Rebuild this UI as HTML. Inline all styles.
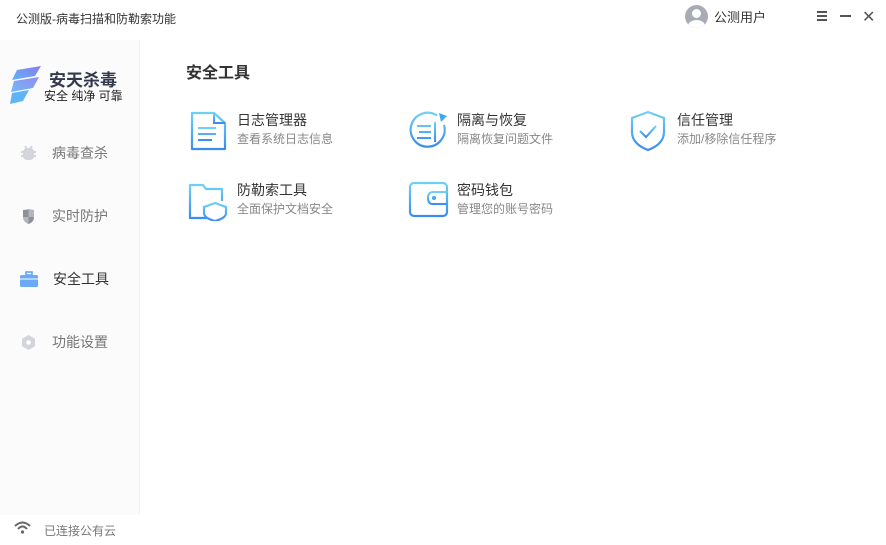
<!DOCTYPE html>
<html><head><meta charset="utf-8"><style>
*{margin:0;padding:0;box-sizing:border-box}
body{width:886px;height:545px;background:#fff;font-family:"Liberation Sans","Noto Sans CJK SC",sans-serif;position:relative;overflow:hidden;color:#333}
.abs{position:absolute}
.side{left:0;top:40px;width:140px;height:475px;background:#fbfbfc;border-right:1px solid #f1f1f3}
.nav{left:20px;font-size:14px;color:#777;display:flex;align-items:center}
.nav span{margin-left:15px}
.tool{display:flex}
.tool .t{font-size:14px;color:#333;line-height:18px}
.tool .s{font-size:12px;color:#888;margin-top:2px;line-height:16px}
svg{display:block}
</style></head><body>
<div class="abs" style="left:16px;top:10px;font-size:12px;color:#333">公测版-病毒扫描和防勒索功能</div>
<div class="abs" style="left:685px;top:5px;width:23px;height:23px;border-radius:50%;background:#a9acb5;overflow:hidden">
<div style="position:absolute;left:7px;top:4px;width:9px;height:9px;border-radius:50%;background:#fff"></div>
<div style="position:absolute;left:3px;top:15px;width:17px;height:12px;border-radius:50%;background:#fff"></div></div>
<div class="abs" style="left:714px;top:9px;font-size:13px;color:#333;line-height:18px">公测用户</div>
<div class="abs" style="left:817px;top:11px;width:10px"><div style="height:1.5px;background:#555;margin-bottom:2.5px"></div><div style="height:1.5px;background:#555;margin-bottom:2.5px"></div><div style="height:1.5px;background:#555"></div></div>
<div class="abs" style="left:840px;top:15px;width:11px;height:2px;background:#555"></div>
<div class="abs" style="left:862px;top:7px;font-size:16px;color:#555">✕</div>

<div class="abs side"></div>
<svg class="abs" style="left:9px;top:66px" width="36" height="38" viewBox="0 0 36 38"><defs><linearGradient id="g" x1="0" y1="1" x2="1" y2="0"><stop offset="0" stop-color="#5fb4f6"/><stop offset="1" stop-color="#8a7cf0"/></linearGradient></defs>
<path d="M8 4 L32 0 L26 10 L3 14Z" fill="url(#g)"/><path d="M5 15 L30 11 L24 22 L2 26Z" fill="url(#g)" opacity=".9"/><path d="M3 27 L20 24 L14 35 L1 38Z" fill="#5fb4f6"/></svg>
<div class="abs" style="left:49px;top:66px;font-size:17px;font-weight:bold;color:#333a4d">安天杀毒</div>
<div class="abs" style="left:44px;top:87px;font-size:12px;color:#222">安全 纯净 可靠</div>

<div class="abs nav" style="top:143px"><svg width="17" height="17" viewBox="0 0 17 17"><rect x="3" y="3" width="11" height="12" rx="4" fill="#d4d5dc"/><path d="M1 7h15M1 11h15M5 1l2 3M12 1l-2 3" stroke="#d4d5dc" stroke-width="2"/></svg><span>病毒查杀</span></div>
<div class="abs nav" style="top:206px"><svg width="17" height="17" viewBox="0 0 17 17"><path d="M3 2 L8.5 1 L14 2 V9 Q14 14 8.5 16 Q3 14 3 9Z" fill="#b5b6bd"/><path d="M8.5 2 V9 H3 V2Z M8.5 9 H14 Q14 14 8.5 16Z" fill="#8e9098"/></svg><span>实时防护</span></div>
<div class="abs nav" style="top:269px"><svg width="18" height="17" viewBox="0 0 18 17"><rect x="6" y="1" width="6" height="3" fill="none" stroke="#5a9ff5" stroke-width="1.5"/><rect x="0" y="4" width="18" height="12" rx="1.5" fill="#6aaaf7"/><path d="M0 8h18" stroke="#fff" stroke-width="1"/></svg><span style="color:#333">安全工具</span></div>
<div class="abs nav" style="top:332px"><svg width="17" height="17" viewBox="0 0 17 17"><path d="M8.5 1 L15 4.8 V12.2 L8.5 16 L2 12.2 V4.8Z" fill="#d4d5dc"/><circle cx="8.5" cy="8.5" r="2.3" fill="#fff"/></svg><span>功能设置</span></div>

<svg class="abs" style="left:14px;top:521px" width="17" height="13" viewBox="0 0 17 13"><path d="M1 5 Q8.5 -2 16 5" fill="none" stroke="#666" stroke-width="2"/><path d="M4 8 Q8.5 3 13 8" fill="none" stroke="#666" stroke-width="2"/><circle cx="8.5" cy="11" r="1.6" fill="#666"/></svg>
<div class="abs" style="left:44px;top:522px;font-size:12px;color:#777">已连接公有云</div>

<div class="abs" style="left:186px;top:59px;font-size:16px;font-weight:bold;color:#333">安全工具</div>

<svg width="0" height="0" style="position:absolute"><defs><linearGradient id="b" x1="0" y1="0" x2="0" y2="1"><stop offset="0" stop-color="#6fd0f2"/><stop offset="1" stop-color="#3a8df0"/></linearGradient></defs></svg>

<div class="abs tool" style="left:190px;top:111px"><svg width="38" height="40" viewBox="0 0 38 40"><path d="M2 2 H24 L35 12 V38 H2Z" fill="none" stroke="url(#b)" stroke-width="2.2" stroke-linejoin="round"/><path d="M24 2 V12 H35" fill="none" stroke="url(#b)" stroke-width="2"/><path d="M8 17h18M8 23h18M8 29h14" stroke="url(#b)" stroke-width="2"/></svg><div style="margin-left:9px"><div class="t">日志管理器</div><div class="s">查看系统日志信息</div></div></div>
<div class="abs tool" style="left:409px;top:111px"><svg width="40" height="40" viewBox="0 0 40 40"><path d="M35 14 A17 17 0 1 1 28 4.5" fill="none" stroke="url(#b)" stroke-width="2.2"/><path d="M30 2 L38 5 L32 11Z" fill="#44a6f0"/><path d="M26 11V31M8 15h14M10 21h12M8 27h14" stroke="url(#b)" stroke-width="2"/></svg><div style="margin-left:8px"><div class="t">隔离与恢复</div><div class="s">隔离恢复问题文件</div></div></div>
<div class="abs tool" style="left:630px;top:110px"><svg width="36" height="42" viewBox="0 0 36 42"><path d="M18 2 L34 8 V22 Q34 34 18 40 Q2 34 2 22 V8Z" fill="none" stroke="url(#b)" stroke-width="2.2"/><path d="M10 21 L16 27 L26 16" fill="none" stroke="url(#b)" stroke-width="2"/></svg><div style="margin-left:11px;margin-top:1px"><div class="t">信任管理</div><div class="s">添加/移除信任程序</div></div></div>
<div class="abs tool" style="left:187px;top:181px"><svg width="42" height="40" viewBox="0 0 42 40"><path d="M20 37 H3 V4 H16 L19 8 H35 V20" fill="none" stroke="url(#b)" stroke-width="2.2" stroke-linejoin="round"/><path d="M28 22 L39 26 V32 Q39 37 28 40 Q17 37 17 32 V26Z" fill="none" stroke="url(#b)" stroke-width="2.2"/><path d="M28 10 H35" stroke="url(#b)" stroke-width="2"/></svg><div style="margin-left:8px"><div class="t">防勒索工具</div><div class="s">全面保护文档安全</div></div></div>
<div class="abs tool" style="left:408px;top:181px"><svg width="41" height="38" viewBox="0 0 41 38"><rect x="2" y="2" width="37" height="33" rx="4" fill="none" stroke="url(#b)" stroke-width="2.2"/><path d="M39 11 H25 Q20 11 20 17 Q20 23 25 23 H39" fill="none" stroke="url(#b)" stroke-width="2"/><circle cx="26" cy="17" r="2" fill="#44a6f0"/></svg><div style="margin-left:8px"><div class="t">密码钱包</div><div class="s">管理您的账号密码</div></div></div>
</body></html>
